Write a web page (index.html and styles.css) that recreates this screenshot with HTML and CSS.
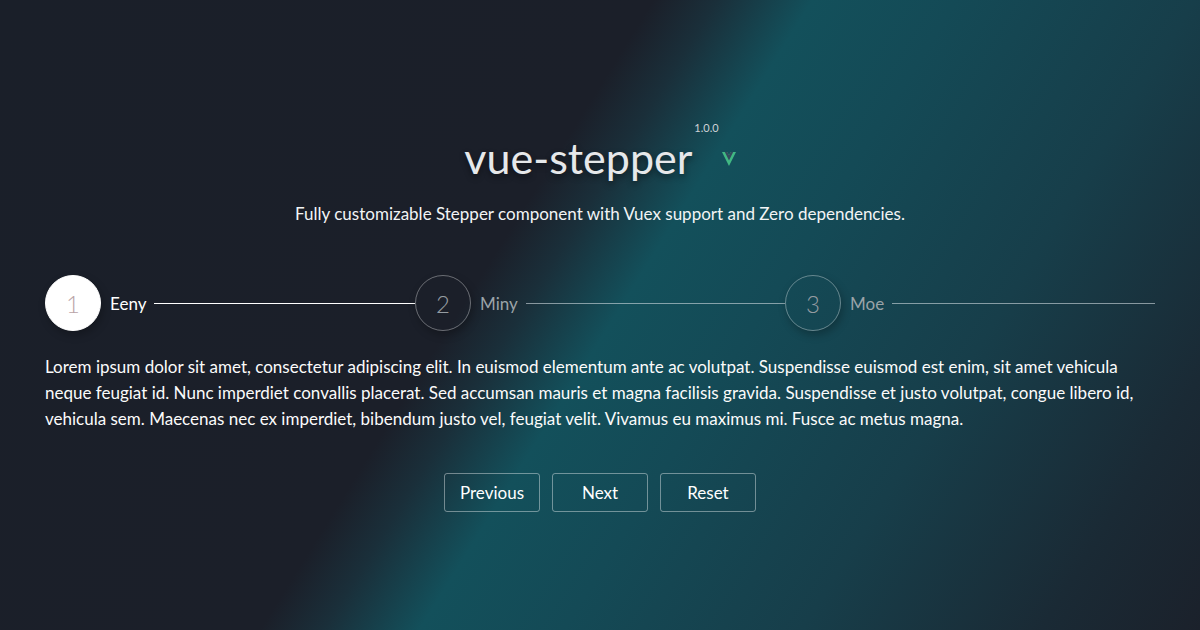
FILE: index.html
```html
<!DOCTYPE html>
<html lang="en">
<head>
<meta charset="utf-8">
<title>vue-stepper</title>
<link rel="stylesheet" href="styles.css">
</head>
<body>
<main class="page">
  <header class="brand">
    <h1 class="brand-title">vue-stepper</h1>
    <span class="brand-version">1.0.0</span>
    <svg class="brand-logo" viewBox="0 0 261.76 226.69" width="14" height="14" preserveAspectRatio="none" aria-hidden="true">
      <path d="M161.096.001l-30.225 52.351L100.647.001H-.005l130.877 226.688L261.749.001z" fill="#41b883"/>
      <path d="M161.096.001l-30.225 52.351L100.647.001H52.346l78.526 136.01L209.398.001z" fill="#34495e"/>
    </svg>
  </header>
  <p class="tagline">Fully customizable Stepper component with Vuex support and Zero dependencies.</p>

  <div class="container">
    <ol class="stepper">
      <li class="step step-active">
        <span class="step-circle">1</span>
        <span class="step-label">Eeny</span>
        <span class="step-line"></span>
      </li>
      <li class="step">
        <span class="step-circle">2</span>
        <span class="step-label">Miny</span>
        <span class="step-line"></span>
      </li>
      <li class="step">
        <span class="step-circle">3</span>
        <span class="step-label">Moe</span>
        <span class="step-line"></span>
      </li>
    </ol>

    <p class="content">Lorem ipsum dolor sit amet, consectetur adipiscing elit. In euismod elementum ante ac volutpat. Suspendisse euismod est enim, sit amet vehicula neque feugiat id. Nunc imperdiet convallis placerat. Sed accumsan mauris et magna facilisis gravida. Suspendisse et justo volutpat, congue libero id, vehicula sem. Maecenas nec ex imperdiet, bibendum justo vel, feugiat velit. Vivamus eu maximus mi. Fusce ac metus magna.</p>

    <div class="actions">
      <button class="btn" type="button">Previous</button>
      <button class="btn" type="button">Next</button>
      <button class="btn" type="button">Reset</button>
    </div>
  </div>
</main>
</body>
</html>
```

FILE: styles.css
```css
* { box-sizing: border-box; }

html, body {
  margin: 0;
  padding: 0;
  width: 1200px;
  height: 630px;
  overflow: hidden;
}

body {
  font-family: Lato, "Open Sans", sans-serif;
  color: #fff;
  background: linear-gradient(122deg,
    #1a1f29 0%,
    #1b1f29 41%,
    #1a2f3a 45%,
    #13505b 51%,
    #144a56 60%,
    #173e4a 75%,
    #1a2a35 90%,
    #1b212b 100%);
}

.page {
  display: flex;
  flex-direction: column;
  align-items: center;
  padding-top: 121px;
}

.brand {
  display: flex;
  align-items: flex-start;
}

.brand-title {
  margin: 11px 0 0 0;
  font-size: 43px;
  line-height: 52px;
  font-weight: 400;
  color: #e6e8ea;
  text-shadow: 0 3px 6px rgba(0, 0, 0, 0.45);
}

.brand-version {
  font-size: 11px;
  line-height: 13px;
  color: #cfd3d6;
  margin-left: 2px;
}

.brand-logo {
  margin-top: 31px;
  margin-left: 3px;
}

.tagline {
  margin: 18px 0 0 0;
  font-size: 17px;
  line-height: 24px;
  color: #f2f4f5;
}

.container {
  width: 1110px;
  margin-top: 49px;
}

.stepper {
  list-style: none;
  margin: 0;
  padding: 0;
  display: flex;
}

.step {
  flex: 1;
  display: flex;
  align-items: center;
}

.step-circle {
  flex: none;
  width: 56px;
  height: 56px;
  border-radius: 50%;
  border: 1px solid rgba(255, 255, 255, 0.35);
  display: flex;
  align-items: center;
  justify-content: center;
  font-size: 24px;
  font-weight: 300;
  color: #959ca2;
  box-shadow: 2px 4px 8px rgba(0, 0, 0, 0.25);
}

.step-label {
  margin-left: 9px;
  font-size: 17px;
  color: #9aa3a8;
}

.step-line {
  flex: 1;
  height: 1px;
  margin-left: 8px;
  background: rgba(210, 220, 225, 0.6);
}

.step-active .step-circle {
  background: #fff;
  border-color: #fff;
  color: #b9a3a7;
}

.step-active .step-label { color: #fff; }
.step-active .step-line { background: #fff; }

.content {
  margin: 23px 0 0 0;
  font-size: 17px;
  line-height: 26px;
  color: #fbfbfb;
}

.actions {
  margin-top: 41px;
  display: flex;
  justify-content: center;
  gap: 12px;
}

.btn {
  width: 96px;
  height: 39px;
  border: 1px solid rgba(255, 255, 255, 0.4);
  border-radius: 3px;
  background: transparent;
  color: #fff;
  font-family: Lato, "Open Sans", sans-serif;
  font-size: 17px;
  padding: 0;
}
```
